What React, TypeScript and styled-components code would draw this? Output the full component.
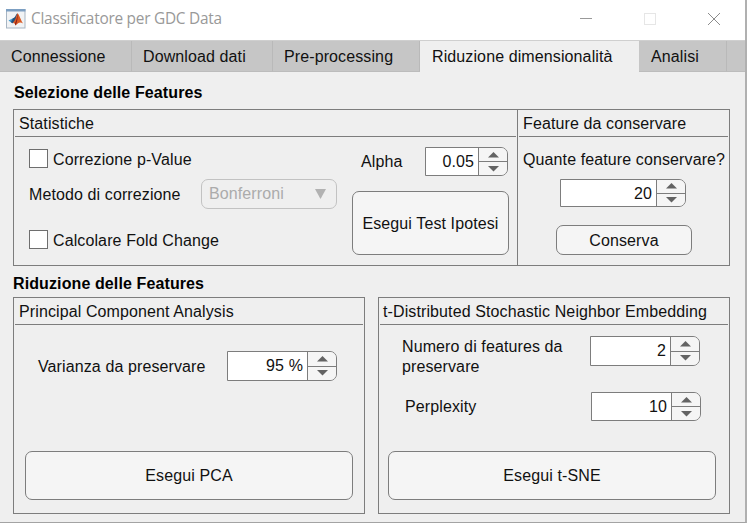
import React from "react";
import styled, { createGlobalStyle } from "styled-components";

const Global = createGlobalStyle`
  *, *::before, *::after { box-sizing: border-box; }
  html, body { margin: 0; padding: 0; }
  body { overflow: hidden; }
`;

const line = "#7d7d7d";

const Window = styled.div`
  display: flex;
  flex-direction: column;
  width: 747px;
  height: 523px;
  background: #efefef;
  border-right: 2px solid #b0b0b0;
  border-bottom: 1px solid #a3a3a3;
  font: 16px/20px "Liberation Sans", Arial, sans-serif;
  letter-spacing: 0.11px;
  color: #111;
  white-space: nowrap;
`;

const TitleBar = styled.header`
  display: flex;
  align-items: center;
  height: 40px;
  padding: 0 0 2px 6px;
  background: #fff;
`;

const Title = styled.h1`
  flex: 1;
  margin: 0 0 0 5px;
  font: 400 15.4px/20px "Open Sans", "Noto Sans", sans-serif;
  letter-spacing: -0.25px;
  color: #999;
`;

const WindowControls = styled.div`
  display: flex;
  gap: 50px;
  margin-right: 24px;
`;

const TabBar = styled.nav`
  display: flex;
  height: 32px;
  background: #c6c6c6;
  border-top: 1px solid #cfcfcf;
`;

const Tab = styled.div<{ $width: number; $active?: boolean; $indent?: number }>`
  width: ${(p) => p.$width}px;
  padding: 6px 0 0 ${(p) => p.$indent ?? 11}px;
  background: ${(p) => (p.$active ? "#efefef" : "#c6c6c6")};
  border-right: ${(p) => (p.$active ? "none" : "1px solid #b9b9b9")};
  border-bottom: ${(p) => (p.$active ? "none" : "1px solid #bcbcbc")};
`;

const TabFill = styled.div`
  flex: 1;
  border-bottom: 1px solid #bcbcbc;
`;

const Content = styled.main`
  padding: 11px 0 0 13px;
`;

const Heading = styled.h2<{ $gap: number; $indent?: number }>`
  height: 20px;
  margin: 0 0 ${(p) => p.$gap}px ${(p) => p.$indent ?? 0}px;
  font-size: 16px;
  line-height: 20px;
  font-weight: 700;
  color: #000;
`;

const Panels = styled.div<{ $height: number; $gap?: number }>`
  display: flex;
  gap: ${(p) => p.$gap ?? 0}px;
  height: ${(p) => p.$height}px;
`;

const Panel = styled.section<{ $width: number; $joined?: boolean }>`
  display: flex;
  flex-direction: column;
  width: ${(p) => p.$width}px;
  margin-left: ${(p) => (p.$joined ? -1 : 0)}px;
  border: 1px solid ${line};
`;

const PanelTitle = styled.h3<{ $indent?: number }>`
  height: 27px;
  margin: 0 1px;
  padding: 4px 0 0 ${(p) => p.$indent ?? 4}px;
  font-size: 16px;
  line-height: 20px;
  font-weight: 400;
  border-bottom: 1px solid ${line};
`;

const StatsBody = styled.div`
  display: grid;
  grid-template-columns: 323px 157px;
  padding: 10px 0 0 15px;
`;

const Column = styled.div<{ $top?: number }>`
  display: flex;
  flex-direction: column;
  padding-top: ${(p) => p.$top ?? 0}px;
`;

const Row = styled.div<{ $height: number; $top?: number; $left?: number; $align?: string }>`
  display: flex;
  align-items: ${(p) => p.$align ?? "center"};
  height: ${(p) => p.$height}px;
  margin-top: ${(p) => p.$top ?? 0}px;
  margin-left: ${(p) => p.$left ?? 0}px;
`;

const Label = styled.span<{ $width?: number; $drop?: number }>`
  flex: none;
  width: ${(p) => (p.$width ? `${p.$width}px` : "auto")};
  padding-top: ${(p) => p.$drop ?? 0}px;
  white-space: pre-line;
`;

const CheckLabel = styled.label<{ $drop?: number }>`
  display: flex;
  align-items: flex-start;
  gap: 5px;
  height: 19px;
  line-height: ${(p) => 20 + (p.$drop ?? 0) * 2}px;
`;

const Box = styled.span`
  width: 19px;
  height: 19px;
  background: #fff;
  border: 1px solid #6e6e6e;
`;

const Select = styled.div`
  display: flex;
  align-items: center;
  justify-content: space-between;
  width: 136px;
  height: 30px;
  padding: 0 10px 1px 7px;
  border: 1px solid #c2c2c2;
  border-radius: 7px;
  color: #ababab;
`;

const Button = styled.button<{ $width: number; $height: number; $top?: number; $left?: number; $drop?: number }>`
  width: ${(p) => p.$width}px;
  height: ${(p) => p.$height}px;
  margin: ${(p) => p.$top ?? 0}px 0 0 ${(p) => p.$left ?? 0}px;
  padding: ${(p) => (p.$drop ?? 0) * 2}px 0 0;
  font: inherit;
  letter-spacing: inherit;
  color: inherit;
  background: #f5f5f5;
  border: 1px solid ${line};
  border-radius: 7px;
`;

const SpinnerFrame = styled.div<{ $width: number; $height: number }>`
  display: flex;
  width: ${(p) => p.$width}px;
  height: ${(p) => p.$height}px;
  border: 1px solid ${line};
  border-radius: 0 7px 7px 0;
  overflow: hidden;
`;

const SpinnerValue = styled.div<{ $drop: number }>`
  flex: 1;
  display: flex;
  align-items: center;
  justify-content: flex-end;
  padding: ${(p) => p.$drop * 2}px 4px 0 0;
  background: #fff;
`;

const SpinnerKeys = styled.div`
  display: flex;
  flex-direction: column;
  width: 29px;
  border-left: 1px solid ${line};
  background: #f5f5f5;
`;

const Key = styled.div`
  flex: 1;
  display: flex;
  align-items: center;
  justify-content: center;
  & + & { border-top: 1px solid ${line}; }
`;

const Body = styled.div`
  display: flex;
  flex-direction: column;
  flex: 1;
`;

type SpinnerProps = { value: string; width: number; height: number; drop?: number };

const Spinner = ({ value, width, height, drop = 0 }: SpinnerProps) => (
  <SpinnerFrame $width={width} $height={height}>
    <SpinnerValue $drop={drop}>{value}</SpinnerValue>
    <SpinnerKeys>
      <Key>
        <svg width="11" height="6" viewBox="0 0 11 6"><path d="M0 5.5 5.5 0 11 5.5Z" fill="#636363" /></svg>
      </Key>
      <Key>
        <svg width="11" height="6" viewBox="0 0 11 6"><path d="M0 0h11L5.5 5.5Z" fill="#636363" /></svg>
      </Key>
    </SpinnerKeys>
  </SpinnerFrame>
);

const AppIcon = () => (
  <svg width="20" height="20" viewBox="0 0 20 20">
    <rect x=".5" y=".5" width="18.5" height="18.5" fill="#f1f3f5" stroke="#a7b5c3" />
    <path d="M0 0h19.5v2.5H0Z" fill="#7c9fc2" />
    <path d="M2.5 11.5 7 9.3 9.2 12 6.2 14.2Z" fill="#3f9bd0" />
    <path d="M7 9.3C9 9 9.8 5.5 11.4 4.2L10 11 8 13.2 6.2 14.2 5 13Z" fill="#24527f" />
    <path d="M11.4 4.2C13 4.5 14.5 11 17.2 14.6 14.5 12.8 12.7 12.8 9.6 16.4 9 14.5 8 13.8 6.2 14.2 9.4 12.4 10 7 11.4 4.2Z" fill="#d95b25" />
    <path d="M11.4 4.5C12 8 11.6 12 9.6 16.4L8.8 14.8C10.4 12 11.2 8.5 11.4 4.5Z" fill="#8e2118" />
  </svg>
);

export default function App() {
  return (
    <>
      <Global />
      <Window>
        <TitleBar>
          <AppIcon />
          <Title>Classificatore per GDC Data</Title>
          <WindowControls>
            <svg width="14" height="14" viewBox="0 0 14 14"><path d="M1 6.5h12" stroke="#999" /></svg>
            <svg width="14" height="14" viewBox="0 0 14 14"><rect x="1.5" y="1.5" width="11" height="11" fill="none" stroke="#e6e6e6" /></svg>
            <svg width="14" height="14" viewBox="0 0 14 14"><path d="m1 1 12 12M13 1 1 13" stroke="#8c8c8c" /></svg>
          </WindowControls>
        </TitleBar>
        <TabBar>
          <Tab $width={132}>Connessione</Tab>
          <Tab $width={141}>Download dati</Tab>
          <Tab $width={147}>Pre-processing</Tab>
          <Tab $width={219} $active $indent={12}>Riduzione dimensionalità</Tab>
          <Tab $width={88} $indent={12}>Analisi</Tab>
          <TabFill />
        </TabBar>
        <Content>
          <Heading $gap={6} $indent={1}>Selezione delle Features</Heading>
          <Panels $height={157}>
            <Panel $width={505}>
              <PanelTitle>Statistiche</PanelTitle>
              <StatsBody>
                <Column $top={2}>
                  <CheckLabel $drop={1}><Box />Correzione p-Value</CheckLabel>
                  <Row $height={30} $top={11}>
                    <Label $width={172} $drop={2}>Metodo di correzione</Label>
                    <Select>
                      Bonferroni
                      <svg width="11" height="10" viewBox="0 0 11 10"><path d="M0 0h11L5.5 10Z" fill="#b2b2b2" /></svg>
                    </Select>
                  </Row>
                  <Row $height={19} $top={21}>
                    <CheckLabel $drop={1}><Box />Calcolare Fold Change</CheckLabel>
                  </Row>
                </Column>
                <Column>
                  <Row $height={29} $left={9}>
                    <Label $width={64}>Alpha</Label>
                    <Spinner value="0.05" width={83} height={29} />
                  </Row>
                  <Button $width={157} $height={64} $top={15} $drop={1}>Esegui Test Ipotesi</Button>
                </Column>
              </StatsBody>
            </Panel>
            <Panel $width={213} $joined>
              <PanelTitle>Feature da conservare</PanelTitle>
              <Body>
                <Row $height={20} $top={13} $left={5}><Label>Quante feature conservare?</Label></Row>
                <Row $height={28} $top={9} $left={42}><Spinner value="20" width={126} height={28} drop={1} /></Row>
                <Button $width={136} $height={30} $top={18} $left={38} $drop={1}>Conserva</Button>
              </Body>
            </Panel>
          </Panels>
          <Row $height={8} />
          <Heading $gap={3}>Riduzione delle Features</Heading>
          <Panels $height={217} $gap={13}>
            <Panel $width={352}>
              <PanelTitle>Principal Component Analysis</PanelTitle>
              <Body>
                <Row $height={30} $top={26} $left={24}>
                  <Label $width={189} $drop={2}>Varianza da preservare</Label>
                  <Spinner value="95 %" width={110} height={30} />
                </Row>
                <Button $width={328} $height={49} $top={70} $left={11}>Esegui PCA</Button>
              </Body>
            </Panel>
            <Panel $width={352}>
              <PanelTitle $indent={3}>t-Distributed Stochastic Neighbor Embedding</PanelTitle>
              <Body>
                <Row $height={40} $top={11} $left={23} $align="flex-start">
                  <Label $width={188} $drop={1}>{"Numero di features da\npreservare"}</Label>
                  <Spinner value="2" width={110} height={30} />
                </Row>
                <Row $height={29} $top={16} $left={26}>
                  <Label $width={186}>Perplexity</Label>
                  <Spinner value="10" width={110} height={29} />
                </Row>
                <Button $width={328} $height={49} $top={30} $left={9}>Esegui t-SNE</Button>
              </Body>
            </Panel>
          </Panels>
        </Content>
      </Window>
    </>
  );
}
